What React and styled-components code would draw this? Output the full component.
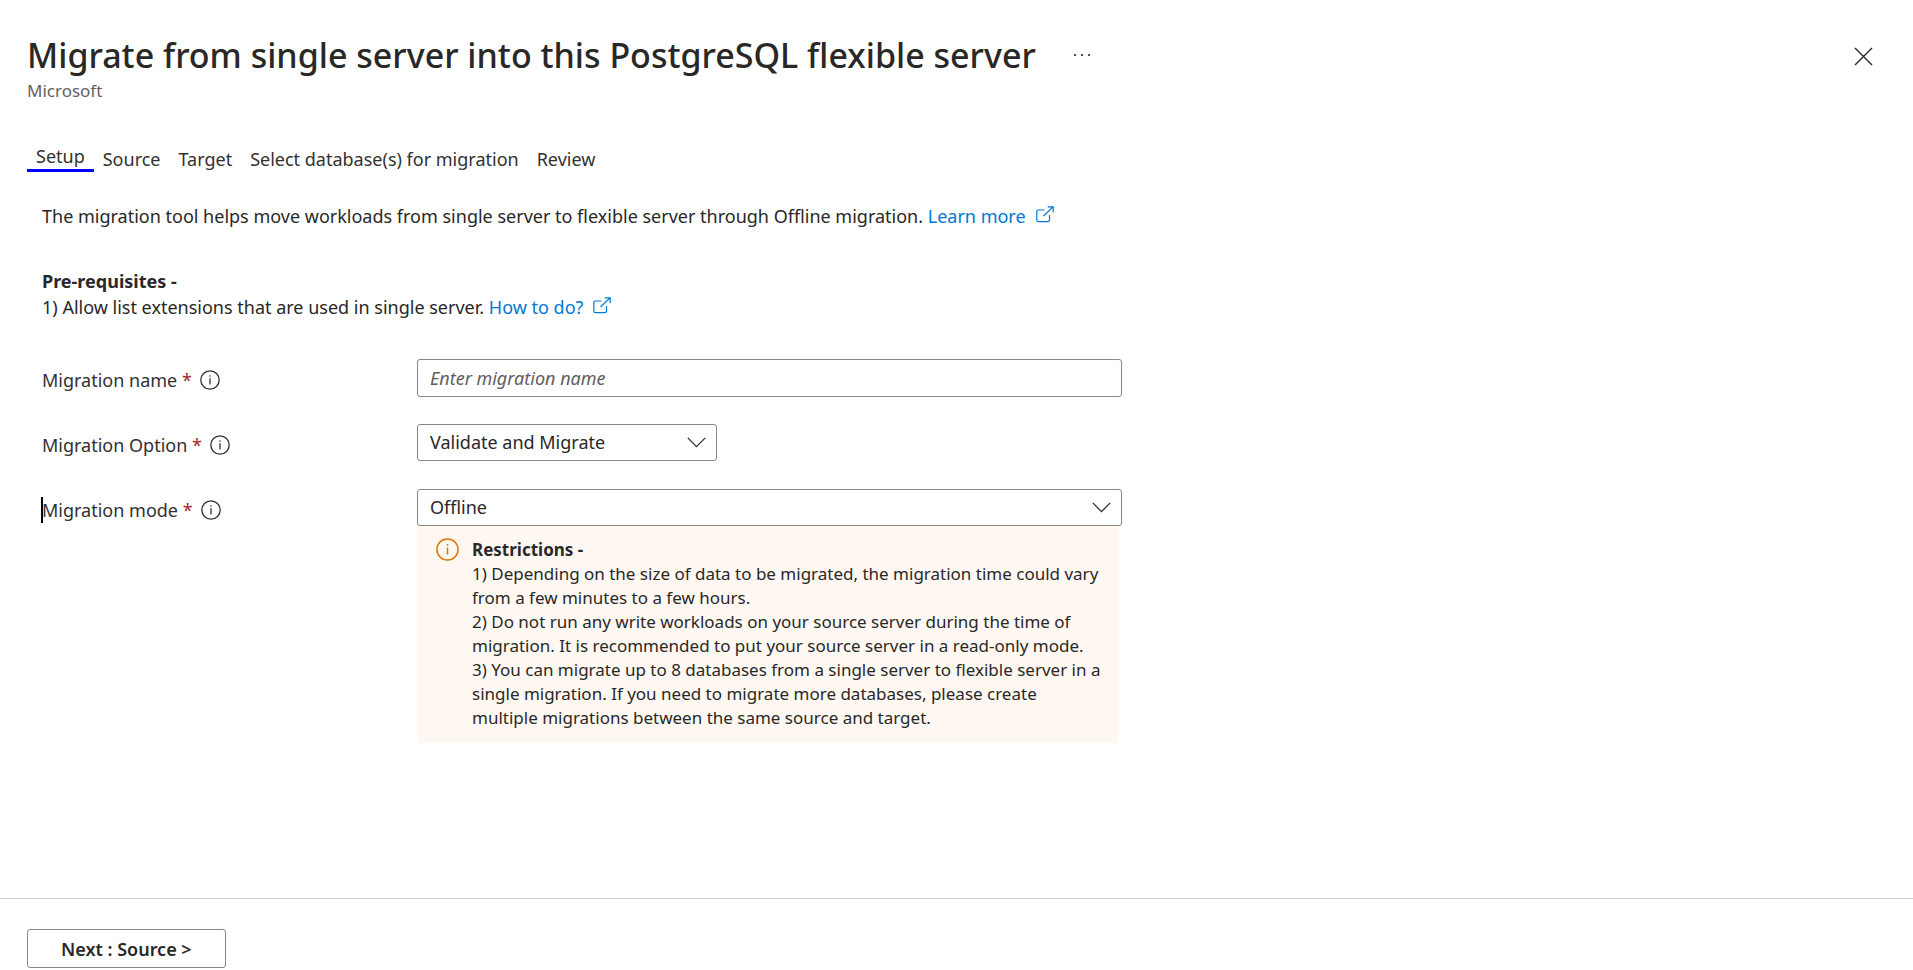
import React from "react";
import styled, { createGlobalStyle, css } from "styled-components";

const GlobalStyle = createGlobalStyle`
  *, *::before, *::after { box-sizing: border-box; }
  body {
    margin: 0;
    background: #ffffff;
    color: #292827;
    font-family: "Segoe UI", "Noto Sans", "Open Sans", sans-serif;
    font-size: 18px;
    line-height: 26px;
  }
`;

const Page = styled.div`
  display: flex;
  flex-direction: column;
  min-height: 100vh;
`;

const Header = styled.header`
  display: flex;
  align-items: flex-start;
  justify-content: space-between;
  padding: 31px 40px 0 27px;
`;

const TitleRow = styled.div`
  display: flex;
  align-items: center;
  gap: 36px;
`;

const Title = styled.h1`
  margin: 0;
  font-size: 34px;
  font-weight: 500;
  line-height: 48px;
`;

const Publisher = styled.p`
  margin: 0;
  color: #646260;
  font-size: 17px;
  line-height: 24px;
`;

const IconButton = styled.button`
  display: flex;
  padding: 0;
  border: 0;
  background: none;
  color: #292827;
  cursor: pointer;
`;

const CloseButton = styled(IconButton)`
  margin-top: 16px;
`;

const Tabs = styled.nav`
  display: flex;
  align-items: flex-end;
  padding: 40px 27px 0;
`;

const Tab = styled.a`
  padding: 0 9px;
  color: #323130;
  text-decoration: none;
  ${({ $active }) =>
    $active &&
    css`
      border-bottom: 3px solid #0000ff;
    `}
`;

const Main = styled.main`
  flex: 1;
  padding: 31px 42px;
`;

const Paragraph = styled.p`
  margin: 0 0 ${({ $space }) => $space}px;
`;

const Link = styled.a`
  color: #0078d4;
  text-decoration: none;

  svg {
    margin-left: 10px;
  }
`;

const Form = styled.form`
  display: grid;
  grid-template-columns: 375px minmax(0, 705px);
  row-gap: 23px;
`;

const LabelCell = styled.div`
  display: flex;
  align-items: center;
  align-self: start;
  gap: 8px;
  height: 42px;
`;

const Label = styled.label`
  color: #323130;
  ${({ $caret }) =>
    $caret &&
    css`
      box-shadow: -1px 0 0 #000000, inset 1px 0 0 #000000;
    `}
`;

const Required = styled.span`
  color: #a4262c;
`;

const controlStyle = css`
  width: 100%;
  border: 1px solid #8a8886;
  border-radius: 3px;
  background: #ffffff;
  color: #292827;
  font: inherit;
`;

const TextInput = styled.input`
  ${controlStyle}
  height: 38px;
  padding: 0 12px;

  &::placeholder {
    color: #605e5c;
    font-style: italic;
    opacity: 1;
  }
`;

const SelectBox = styled.div`
  display: grid;
  align-items: center;
  align-self: start;
  max-width: ${({ $width }) => $width || "none"};

  > * {
    grid-area: 1 / 1;
  }

  svg {
    justify-self: end;
    margin-right: 11px;
    pointer-events: none;
  }
`;

const Select = styled.select`
  ${controlStyle}
  height: 37px;
  padding: 0 40px 2px 12px;
  appearance: none;
`;

const Notice = styled.div`
  display: flex;
  gap: 13px;
  margin-right: 3px;
  padding: 12px 14px 13px 19px;
  background: #fff8f2;
  font-size: 17px;
  line-height: 24px;

  svg {
    flex: none;
  }
`;

const Footer = styled.footer`
  padding: 30px 27px 2px;
  border-top: 1px solid #d2d0ce;
`;

const NextButton = styled.button`
  height: 39px;
  padding: 0 33px;
  border: 1px solid #8a8886;
  border-radius: 3px;
  background: #ffffff;
  color: #292827;
  font: inherit;
  font-weight: 600;
  cursor: pointer;
`;

const ExternalIcon = () => (
  <svg width="18" height="17" viewBox="0 0 18 17" fill="none" stroke="currentColor" strokeWidth="1.2" aria-hidden="true">
    <path d="M8.5 4H2.4Q.8 4 .8 5.6V14Q.8 15.6 2.4 15.6H11.9Q13.5 15.6 13.5 14V9" />
    <path d="M7.5 10 17 .9M11.8.8H17.2V6.2" />
  </svg>
);

const InfoIcon = ({ size = 20, color = "#323130" }) => (
  <svg width={size} height={size} viewBox="0 0 20 20" fill="none" stroke={color} strokeWidth="1.3" aria-hidden="true">
    <circle cx="10" cy="10" r="9.2" />
    <path d="M10 8.3V14.4" />
    <circle cx="10" cy="6" r=".8" fill={color} stroke="none" />
  </svg>
);

const ChevronIcon = () => (
  <svg width="19" height="11" viewBox="0 0 19 11" fill="none" stroke="#323130" strokeWidth="1.3" aria-hidden="true">
    <path d="M.8.9 9.5 9.7 18.2.9" />
  </svg>
);

const tabs = ["Setup", "Source", "Target", "Select database(s) for migration", "Review"];

const FieldLabel = ({ id, text, caret }) => (
  <LabelCell>
    <Label htmlFor={id} $caret={caret}>
      {text} <Required>*</Required>
    </Label>
    <InfoIcon />
  </LabelCell>
);

export default function App() {
  return (
    <Page>
      <GlobalStyle />
      <Header>
        <div>
          <TitleRow>
            <Title>Migrate from single server into this PostgreSQL flexible server</Title>
            <IconButton type="button" aria-label="More actions">
              <svg width="20" height="4" viewBox="0 0 20 4" fill="currentColor" aria-hidden="true">
                <circle cx="3" cy="2" r="1.1" />
                <circle cx="10" cy="2" r="1.1" />
                <circle cx="17" cy="2" r="1.1" />
              </svg>
            </IconButton>
          </TitleRow>
          <Publisher>Microsoft</Publisher>
        </div>
        <CloseButton type="button" aria-label="Close">
          <svg width="19" height="19" viewBox="0 0 19 19" fill="none" stroke="currentColor" strokeWidth="1.4" aria-hidden="true">
            <path d="M1 1 18 18M18 1 1 18" />
          </svg>
        </CloseButton>
      </Header>
      <Tabs aria-label="Migration steps">
        {tabs.map((name, i) => (
          <Tab key={name} href="#" $active={i === 0} aria-current={i === 0 ? "step" : undefined}>
            {name}
          </Tab>
        ))}
      </Tabs>
      <Main>
        <Paragraph $space={39}>
          The migration tool helps move workloads from single server to flexible server through Offline migration.{" "}
          <Link href="#">
            Learn more
            <ExternalIcon />
          </Link>
        </Paragraph>
        <Paragraph $space={39}>
          <strong>Pre-requisites -</strong>
          <br />
          1) Allow list extensions that are used in single server.{" "}
          <Link href="#">
            How to do?
            <ExternalIcon />
          </Link>
        </Paragraph>
        <Form>
          <FieldLabel id="name" text="Migration name" />
          <TextInput id="name" type="text" placeholder="Enter migration name" />
          <FieldLabel id="option" text="Migration Option" />
          <SelectBox $width="300px">
            <Select id="option" defaultValue="both">
              <option value="both">Validate and Migrate</option>
            </Select>
            <ChevronIcon />
          </SelectBox>
          <FieldLabel id="mode" text="Migration mode" caret />
          <div>
            <SelectBox>
              <Select id="mode" defaultValue="offline">
                <option value="offline">Offline</option>
              </Select>
              <ChevronIcon />
            </SelectBox>
            <Notice>
              <InfoIcon size={23} color="#db7500" />
              <div>
                <strong>Restrictions -</strong>
                <br />
                1) Depending on the size of data to be migrated, the migration time could vary from a few minutes to a few
                hours.
                <br />
                2) Do not run any write workloads on your source server during the time of migration. It is recommended to
                put your source server in a read-only mode.
                <br />
                3) You can migrate up to 8 databases from a single server to flexible server in a single migration. If you
                need to migrate more databases, please create multiple migrations between the same source and target.
              </div>
            </Notice>
          </div>
        </Form>
      </Main>
      <Footer>
        <NextButton type="button">Next : Source &gt;</NextButton>
      </Footer>
    </Page>
  );
}
